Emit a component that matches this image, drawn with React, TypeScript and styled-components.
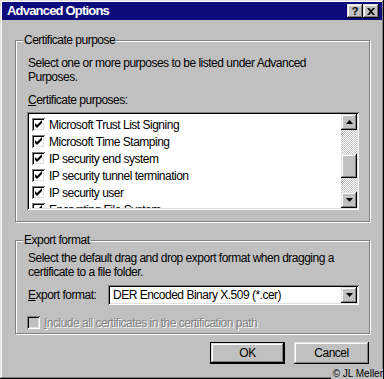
import React from 'react';
import styled, { createGlobalStyle } from 'styled-components';

const GlobalStyle = createGlobalStyle`
  html, body {
    margin: 0;
    padding: 0;
    background: #c0c0c0;
  }
  body {
    font-family: "Liberation Sans", Arial, sans-serif;
    font-size: 12px;
    letter-spacing: -0.5px;
    color: #000;
  }
`;

const raised = `
  box-shadow: inset -1px -1px #000, inset 1px 1px #dfdfdf, inset -2px -2px #808080, inset 2px 2px #fff;
`;

const sunken = `
  box-shadow: inset 1px 1px #808080, inset -1px -1px #fff, inset 2px 2px #000, inset -2px -2px #dfdfdf;
`;

const Window = styled.div`
  position: relative;
  width: 384px;
  height: 379px;
  box-sizing: border-box;
  padding: 2px;
  background: #c0c0c0;
  display: flex;
  flex-direction: column;
  ${raised}
`;

const TitleBar = styled.div`
  height: 18px;
  display: flex;
  align-items: center;
  padding: 0 3px 0 5px;
  background: #0c0c7c;
`;

const Title = styled.div`
  flex: 1;
  color: #fff;
  font-weight: bold;
  font-size: 13px;
  letter-spacing: -0.8px;
  line-height: 14px;
`;

const CaptionButton = styled.div<{ $gap?: number }>`
  width: 16px;
  height: 14px;
  margin-left: ${(p) => p.$gap ?? 0}px;
  background: #c0c0c0;
  display: flex;
  align-items: center;
  justify-content: center;
  font-weight: bold;
  font-size: 11px;
  letter-spacing: 0;
  line-height: 12px;
  ${raised}
`;

const Body = styled.div`
  flex: 1;
  display: flex;
  flex-direction: column;
  padding: 13px 12px 0 13px;
`;

const GroupBox = styled.fieldset<{ $top?: number; $bottom: number }>`
  margin: ${(p) => p.$top ?? 0}px 0 0;
  padding: 0 7px ${(p) => p.$bottom}px;
  min-width: 0;
  border: 1px solid #808080;
  box-shadow: inset 1px 1px #fff, 1px 1px #fff;
`;

const Legend = styled.legend`
  padding: 0 1px;
  line-height: 14px;
  background: #c0c0c0;
`;

const GroupBody = styled.div<{ $top: number }>`
  padding: ${(p) => p.$top}px 3px 0 4px;
  display: flex;
  flex-direction: column;
`;

const Text = styled.p<{ $top?: number }>`
  margin: ${(p) => p.$top ?? 0}px 0 0 1px;
  line-height: 14px;
  white-space: nowrap;
`;

const ListBox = styled.div`
  margin-top: 5px;
  height: 98px;
  box-sizing: border-box;
  padding: 2px;
  background: #fff;
  display: flex;
  ${sunken}
`;

const Items = styled.div`
  flex: 1;
  overflow: hidden;
  padding: 2px 0 0 3px;
`;

const Item = styled.div`
  height: 17px;
  display: flex;
  align-items: center;
  gap: 4px;
  line-height: 14px;
  white-space: nowrap;
`;

const Box = styled.div<{ $disabled?: boolean }>`
  width: 13px;
  height: 13px;
  flex: none;
  box-sizing: border-box;
  display: flex;
  align-items: center;
  justify-content: center;
  background: ${(p) => (p.$disabled ? '#c0c0c0' : '#fff')};
  ${sunken}
`;

const ScrollBar = styled.div`
  width: 16px;
  display: flex;
  flex-direction: column;
`;

const ArrowButton = styled.div`
  width: 16px;
  height: 16px;
  flex: none;
  display: flex;
  align-items: center;
  justify-content: center;
  background: #c0c0c0;
  ${raised}
`;

const Track = styled.div`
  flex: 1;
  padding-top: 24px;
  background-color: #c0c0c0;
  background-image: repeating-conic-gradient(#fff 0 25%, #c0c0c0 0 50%);
  background-size: 2px 2px;
`;

const Thumb = styled.div`
  height: 24px;
  background: #c0c0c0;
  ${raised}
`;

const FieldRow = styled.div`
  margin-top: 6px;
  display: flex;
  align-items: center;
  line-height: 14px;
`;

const FieldLabel = styled.div`
  width: 80px;
  padding-left: 1px;
  white-space: nowrap;
`;

const Select = styled.div`
  flex: 1;
  height: 20px;
  box-sizing: border-box;
  padding: 2px 2px 2px 5px;
  display: flex;
  align-items: center;
  background: #fff;
  ${sunken}
`;

const SelectValue = styled.div`
  flex: 1;
  line-height: 14px;
  white-space: nowrap;
`;

const CheckRow = styled.div`
  margin-top: 9px;
  height: 17px;
  display: flex;
  align-items: center;
  gap: 4px;
  line-height: 14px;
  white-space: nowrap;
`;

const DisabledLabel = styled.span`
  color: #808080;
  text-shadow: 1px 1px #fff;
`;

const ButtonRow = styled.div`
  margin-top: 8px;
  display: flex;
  justify-content: flex-end;
  gap: 9px;
  padding-right: 1px;
`;

const Button = styled.div<{ $default?: boolean }>`
  width: 75px;
  height: 22px;
  box-sizing: border-box;
  display: flex;
  align-items: center;
  justify-content: center;
  background: #c0c0c0;
  line-height: 14px;
  border: ${(p) => (p.$default ? '1px solid #000' : 'none')};
  ${raised}
`;

const Credit = styled.div`
  position: absolute;
  right: 1px;
  bottom: 0;
  padding-left: 2px;
  font-size: 10px;
  letter-spacing: 0;
  line-height: 10px;
  background: #c0c0c0;
`;

const Check = () => (
  <svg width="9" height="9" viewBox="0 0 9 9">
    <path d="M1 3 L3 5 L8 0 L8 3 L3 8 L1 6 Z" fill="#000" />
  </svg>
);

const UpArrow = () => (
  <svg width="7" height="4" viewBox="0 0 7 4">
    <path d="M3.5 0 L7 4 L0 4 Z" fill="#000" />
  </svg>
);

const DownArrow = () => (
  <svg width="7" height="4" viewBox="0 0 7 4">
    <path d="M0 0 L7 0 L3.5 4 Z" fill="#000" />
  </svg>
);

const CloseGlyph = () => (
  <svg width="8" height="7" viewBox="0 0 8 7">
    <path d="M0 0 L2 0 L4 2 L6 0 L8 0 L5 3.5 L8 7 L6 7 L4 5 L2 7 L0 7 L3 3.5 Z" fill="#000" />
  </svg>
);

const purposes = [
  'Microsoft Trust List Signing',
  'Microsoft Time Stamping',
  'IP security end system',
  'IP security tunnel termination',
  'IP security user',
  'Encrypting File System',
];

export default function App() {
  return (
    <>
      <GlobalStyle />
      <Window>
        <TitleBar>
          <Title>Advanced Options</Title>
          <CaptionButton>?</CaptionButton>
          <CaptionButton $gap={0}>
            <CloseGlyph />
          </CaptionButton>
        </TitleBar>
        <Body>
          <GroupBox $bottom={11}>
            <Legend>Certificate purpose</Legend>
            <GroupBody $top={9}>
              <Text>
                Select one or more purposes to be listed under Advanced
                <br />
                Purposes.
              </Text>
              <Text $top={9}>
                <u>C</u>ertificate purposes:
              </Text>
              <ListBox>
                <Items>
                  {purposes.map((p) => (
                    <Item key={p}>
                      <Box>
                        <Check />
                      </Box>
                      {p}
                    </Item>
                  ))}
                </Items>
                <ScrollBar>
                  <ArrowButton>
                    <UpArrow />
                  </ArrowButton>
                  <Track>
                    <Thumb />
                  </Track>
                  <ArrowButton>
                    <DownArrow />
                  </ArrowButton>
                </ScrollBar>
              </ListBox>
            </GroupBody>
          </GroupBox>
          <GroupBox $top={11} $bottom={2}>
            <Legend>Export format</Legend>
            <GroupBody $top={4}>
              <Text>
                Select the default drag and drop export format when dragging a
                <br />
                certificate to a file folder.
              </Text>
              <FieldRow>
                <FieldLabel>
                  <u>E</u>xport format:
                </FieldLabel>
                <Select>
                  <SelectValue>DER Encoded Binary X.509 (*.cer)</SelectValue>
                  <ArrowButton>
                    <DownArrow />
                  </ArrowButton>
                </Select>
              </FieldRow>
              <CheckRow>
                <Box $disabled />
                <DisabledLabel>
                  <u>I</u>nclude all certificates in the certification path
                </DisabledLabel>
              </CheckRow>
            </GroupBody>
          </GroupBox>
          <ButtonRow>
            <Button $default>OK</Button>
            <Button>Cancel</Button>
          </ButtonRow>
        </Body>
        <Credit>© JL Meller</Credit>
      </Window>
    </>
  );
}
